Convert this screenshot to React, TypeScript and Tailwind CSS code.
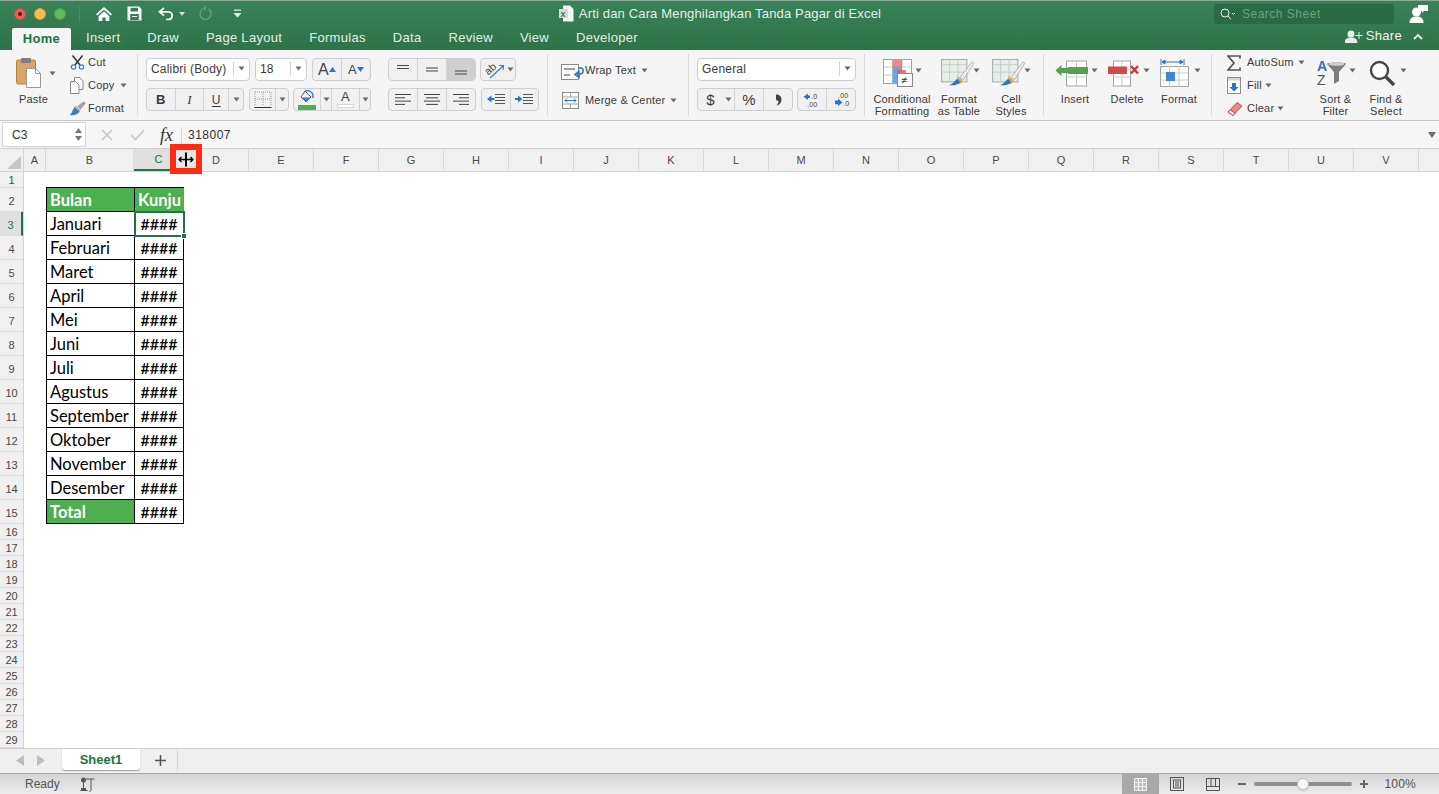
import React from "react";

const Caret = ({ className = "" }: { className?: string }) => (
  <svg width="7" height="5" viewBox="0 0 7 5" className={`shrink-0 ${className}`}>
    <path d="M0.500 0.500h6L3.500 4.500z" fill="#6b6b6b" />
  </svg>
);

const Btn = ({ w, active, children, sep = true }: { w: string; active?: boolean; children?: React.ReactNode; sep?: boolean }) => (
  <div className={`${w} h-full flex items-center justify-center ${sep ? "border-r border-[#d4d4d4] last:border-r-0" : ""} ${active ? "bg-[#cfcfcf]" : ""}`}>
    {children}
  </div>
);

const Seg = ({ w, children, className = "" }: { w: string; children?: React.ReactNode; className?: string }) => (
  <div className={`${w} h-[23px] flex rounded-[4px] border border-[#cfcfcf] bg-[#f1f1f1] overflow-hidden shrink-0 ${className}`}>
    {children}
  </div>
);

const Lines = ({ kind }: { kind: "l" | "c" | "r" }) => {
  const rows = [
    [0, 16],
    [kind === "l" ? 0 : kind === "c" ? 2 : 6, kind === "l" ? 10 : kind === "c" ? 14 : 16],
    [0, 16],
    [kind === "l" ? 0 : kind === "c" ? 2 : 6, kind === "l" ? 10 : kind === "c" ? 14 : 16],
  ];
  return (
    <svg width="16" height="13" viewBox="0 0 16 13">
      {rows.map((r, i) => (
        <path key={i} d={`M${r[0]} ${1.5 + i * 3.3}H${r[1]}`} stroke="#444" strokeWidth="1" />
      ))}
    </svg>
  );
};

const TitleIcons = () => (
  <div className="flex items-center h-full">
    <div className="flex items-center gap-[8px] pl-[14px]">
      <div className="w-[12px] h-[12px] rounded-full bg-[#ec5f57] border border-[#cf4a42] flex items-center justify-center">
        <div className="w-[4px] h-[4px] rounded-full bg-[#5a1410]" />
      </div>
      <div className="w-[12px] h-[12px] rounded-full bg-[#f5bd4f] border border-[#d9a23c]" />
      <div className="w-[12px] h-[12px] rounded-full bg-[#5dbb59] border border-[#4ba548]" />
    </div>
    <div className="w-px h-[16px] bg-[#4a8c66] ml-[13px]" />
    <svg width="18" height="16" viewBox="0 0 18 16" className="ml-[15px]">
      <path d="M9 1 1 8.200l1.200 1.300L9 3.400l6.800 6.100L17 8.200zM3.600 10.200V15h3.800v-3.600h3.200V15h3.800v-4.800L9 5.200z" fill="#fff" />
    </svg>
    <svg width="15" height="15" viewBox="0 0 15 15" className="ml-[14px]">
      <path fillRule="evenodd" d="M0.500 0.500h11.500l2.500 2.500v11.500h-14zM3.500 1.800v3.800h7.500V1.800zM3.200 8v6h8.600V8zM5 10h5v1H5z" fill="#fff" />
    </svg>
    <svg width="17" height="14" viewBox="0 0 17 14" className="ml-[16px]">
      <path d="M6 1 1.500 4.800 6 8.600M2 4.800h8.500c5 0 5 7.700-.5 7.700H8" fill="none" stroke="#fff" strokeWidth="1.700" />
    </svg>
    <svg width="6" height="4" viewBox="0 0 6 4" className="ml-[4px]">
      <path d="M0 0h6L3 4z" fill="#cfe0d6" />
    </svg>
    <svg width="15" height="15" viewBox="0 0 15 15" className="ml-[13px]">
      <path d="M8 2C4.500 2 2 4.500 2 7.800s2.500 5.700 5.500 5.700 5.500-2.500 5.500-5.700c0-2-1-3.800-2.600-4.800M7 0v5" fill="none" stroke="#639a7b" strokeWidth="1.500" />
    </svg>
    <svg width="9" height="9" viewBox="0 0 9 9" className="ml-[20px]">
      <path d="M1 0.500h7v1.300H1zM0.500 4h8L4.500 8.500z" fill="#e6efe9" />
    </svg>
  </div>
);

const Paste = () => (
  <svg width="26" height="31" viewBox="0 0 26 31">
    <rect x="0.500" y="3" width="19" height="24" rx="1.500" fill="#d9a566" stroke="#b58548" />
    <rect x="5" y="1" width="10" height="5" rx="1" fill="#7d7d7d" />
    <circle cx="10" cy="2.500" r="1.500" fill="#7d7d7d" />
    <path d="M10.500 11.500h9l5 5v14h-14z" fill="#fff" stroke="#9a9a9a" />
    <path d="M19.500 11.500v5h5" fill="none" stroke="#9a9a9a" />
  </svg>
);

const Scissors = () => (
  <svg width="15" height="15" viewBox="0 0 15 15">
    <path d="M2.500 0.500 10 10M12.500 0.500 5 10" stroke="#333" strokeWidth="1.500" fill="none" />
    <circle cx="3.500" cy="12" r="2.200" fill="none" stroke="#3b7fc8" strokeWidth="1.200" />
    <circle cx="11.500" cy="12" r="2.200" fill="none" stroke="#3b7fc8" strokeWidth="1.200" />
  </svg>
);

const CopyIcon = () => (
  <svg width="15" height="17" viewBox="0 0 15 17">
    <path d="M4.500 0.500h5l3.500 3.500v8.500H4.500z" fill="#fbfbfb" stroke="#8c8c8c" />
    <path d="M0.500 4.500h5l3.500 3.500v8.500H0.500z" fill="#fbfbfb" stroke="#8c8c8c" />
  </svg>
);

const Brush = () => (
  <svg width="17" height="15" viewBox="0 0 17 15">
    <path d="M9 5 15 0.800l1.300 1.400L11.500 8z" fill="#a9a9a9" stroke="#6f6f6f" strokeWidth="0.500" />
    <path d="M7 4.500 12 9l-1.200 1.500L5.500 6z" fill="#d7b27a" />
    <path d="M5.500 6l5.300 4.500c-2 3-6 4.500-10.300 3.500 2.500-1 3-5.500 5-8z" fill="#3b7fc8" />
  </svg>
);

const BorderIcon = () => (
  <svg width="18" height="18" viewBox="0 0 18 18">
    <path d="M1 1h16M1 8h16M1 1v14M9 1v14M17 1v14" stroke="#9b9b9b" strokeDasharray="1 1" fill="none" />
    <path d="M0.500 16.500h17" stroke="#333" strokeWidth="1" />
  </svg>
);

const FillIcon = () => (
  <svg width="18" height="20" viewBox="0 0 18 20">
    <path d="M7 1 13 7 8 12 3 7z" fill="#f5f5f5" stroke="#5c5c5c" />
    <path d="M4 7.500h8.500L8 12z" fill="#3b7fc8" />
    <path d="M7 1C10 0 14 1 15 5v3" fill="none" stroke="#3b7fc8" strokeWidth="1.500" />
    <rect x="0" y="15" width="18" height="5" fill="#4caf50" />
  </svg>
);

const RotateAb = () => (
  <svg width="22" height="18" viewBox="0 0 22 18" className="overflow-visible">
    <text x="2" y="12" fontSize="10.500" fill="#444" fontFamily="Liberation Sans" transform="rotate(-42 7 9)">ab</text>
    <path d="M7 17 20 5M16 4.500l4.500 0-.500 4.500" stroke="#3b7fc8" strokeWidth="1.200" fill="none" />
  </svg>
);

const Indent = ({ right }: { right?: boolean }) => (
  <svg width="18" height="13" viewBox="0 0 18 13">
    <path d="M8 1.500h10M8 4.500h10M8 7.500h10M8 10.500h10" stroke="#555" />
    <path d={right ? "M0 5h3V2.500L7.500 6 3 9.500V7H0z" : "M7.500 5h-3V2.500L0 6l4.500 3.500V7h3z"} fill="#2d74c4" />
  </svg>
);

const WrapIcon = () => (
  <svg width="24" height="19" viewBox="0 0 24 19">
    <rect x="0.500" y="3.500" width="17" height="15" fill="#fbfbfb" stroke="#8c8c8c" />
    <path d="M3 8h11M3 14h6" stroke="#444" />
    <path d="M17 7h3c3 0 3 6-1 6h-3M18 10.500l-4 3 4 3z" fill="none" stroke="#2d74c4" strokeWidth="1.600" />
  </svg>
);

const MergeIcon = () => (
  <svg width="17" height="17" viewBox="0 0 17 17">
    <rect x="0.500" y="0.500" width="16" height="16" fill="#fbfbfb" stroke="#8c8c8c" />
    <path d="M0.500 5h16M0.500 12h16M8.500 0.500V5M8.500 12v4.500" stroke="#a5a5a5" />
    <path d="M3 8.500h11M5 6.500l-2 2 2 2M12 6.500l2 2-2 2" fill="none" stroke="#2d74c4" />
  </svg>
);

const Conditional = () => (
  <svg width="34" height="29" viewBox="0 0 34 29">
    <rect x="0.500" y="0.500" width="28" height="24" fill="#fff" stroke="#a3a3a3" />
    <path d="M0.500 8H28M0.500 16H28M9.500 0.500V24M19 0.500V24" stroke="#c9c9c9" />
    <rect x="9.500" y="1" width="9.500" height="7" fill="#e45a5a" opacity=".7" />
    <rect x="9.500" y="8" width="9.500" height="16" fill="#6da5e0" />
    <rect x="14" y="11" width="9" height="6" fill="#e45a5a" opacity=".8" />
    <rect x="14.500" y="14.500" width="15" height="13" fill="#fff" stroke="#8a8a8a" />
    <text x="18" y="25" fontSize="11" fill="#333" fontFamily="Liberation Sans">≠</text>
  </svg>
);

const TableBrush = () => (
  <svg width="36" height="29" viewBox="0 0 36 31">
    <rect x="0.500" y="0.500" width="27" height="24" fill="#e4efe9" stroke="#a3a3a3" />
    <path d="M0.500 6H27M0.500 14H27M9 0.500V24M18 0.500V24" stroke="#c9c9c9" />
    <path d="M20 20 33 3l2 1.500L24 22z" fill="#ececec" stroke="#9a9a9a" strokeWidth="0.700" />
    <path d="M17 18l6 5c-1 3-3 4-5 4z" fill="#dba75c" />
    <path d="M17 21c2 2 3 3 3 4-3 3-6 3-12 3 4-1 6-4 9-7z" fill="#2d74c4" />
  </svg>
);

const InsertIcon = () => (
  <svg width="36" height="27" viewBox="0 0 36 27">
    <rect x="11.500" y="1" width="20" height="25" fill="#fff" stroke="#a3a3a3" />
    <path d="M11.500 9h20M11.500 17h20M21.500 1v25" stroke="#c9c9c9" />
    <rect x="13" y="7" width="20" height="7" fill="#55a04f" />
    <path d="M0.500 10.500 6.500 5v11z" fill="#55a04f" />
    <rect x="6" y="8" width="8" height="5" fill="#55a04f" />
  </svg>
);

const DeleteIcon = () => (
  <svg width="33" height="27" viewBox="0 0 33 27">
    <rect x="5.500" y="1" width="17" height="25" fill="#fff" stroke="#a3a3a3" />
    <path d="M5.500 9h17M5.500 17h17M14 1v25" stroke="#c9c9c9" />
    <rect x="0" y="6.500" width="19" height="7.500" fill="#cf4b4b" />
    <path d="M23 6l7 7.500M30 6l-7 7.500" stroke="#c23b3b" strokeWidth="2.400" />
  </svg>
);

const FormatIcon = () => (
  <svg width="30" height="28" viewBox="0 0 30 28">
    <path d="M1 0v6M24 0v6M2 3h21M2 3l3-2v4zM23 3l-3-2v4z" stroke="#2d74c4" fill="#2d74c4" strokeWidth="1" />
    <rect x="0.500" y="7.500" width="28" height="20" fill="#fff" stroke="#a3a3a3" />
    <path d="M0.500 14h28M0.500 21h28M9.500 7.500v20M19 7.500v20" stroke="#c9c9c9" />
    <rect x="6" y="13" width="9" height="9" fill="#3d85d8" />
  </svg>
);

const Eraser = () => (
  <svg width="16" height="16" viewBox="0 0 16 16">
    <path d="M1 11 10 1.500l5 3.500-9 9.500z" fill="#ef8a8a" stroke="#c24d4d" />
    <path d="M1 11l5 3.500 2-2.200-5-3.500z" fill="#f7f0f0" stroke="#c24d4d" />
  </svg>
);

const FillBox = () => (
  <svg width="14" height="17" viewBox="0 0 14 17">
    <rect x="0.500" y="0.500" width="13" height="16" fill="#fff" stroke="#8c8c8c" />
    <rect x="1" y="1" width="12" height="2.500" fill="#d5d5d5" />
    <path d="M5 6h4v4h2.500L7 14.500 2.500 10H5z" fill="#2d74c4" />
  </svg>
);

const SortIcon = () => (
  <svg width="33" height="30" viewBox="0 0 33 30" className="overflow-visible">
    <text x="1" y="13" fontSize="14" fontWeight="700" fill="#2d74c4" fontFamily="Liberation Sans">A</text>
    <text x="1" y="27" fontSize="14" fill="#555" fontFamily="Liberation Sans">Z</text>
    <path d="M11 6c0-2 19-2 19 0l-7 8v9l-5 3V14z" fill="#7c7c7c" />
    <ellipse cx="20.500" cy="6" rx="8" ry="1.800" fill="#cfcfcf" />
  </svg>
);

const Magnifier = () => (
  <svg width="27" height="27" viewBox="0 0 27 27">
    <circle cx="10.500" cy="10.500" r="8.500" fill="#fff" stroke="#444" strokeWidth="2.400" />
    <path d="M17 17l8 8" stroke="#444" strokeWidth="3.400" />
  </svg>
);

const Divider = () => <div className="w-px h-[62px] bg-[#dcdcdc] mt-[4px] shrink-0" />;

const LargeAction = ({ label, icon, w, row = "", caret = "" }: { label: string[]; icon: React.ReactNode; w: string; row?: string; caret?: string }) => (
  <div className={`${w} flex flex-col items-center shrink-0`}>
    <div className={`h-[36px] mt-[4px] flex items-center ${row}`}>
      <span className="shrink-0 block mt-[2px]">{icon}</span>
      <Caret className={`${caret} mt-[-3px]`} />
    </div>
    <div className="mt-[3px] text-center leading-[12px]">
      {label.map((l) => (
        <div key={l}>{l}</div>
      ))}
    </div>
  </div>
);

const Ribbon = () => (
  <div className="h-[71px] flex bg-[#f5f5f5] border-b border-[#c9c9c9] text-[11px] leading-none tracking-[0.2px] text-[#3a3a3a] shrink-0">
    {/* Clipboard */}
    <div className="w-[137px] flex shrink-0">
      <div className="w-[65px] shrink-0 flex flex-col pl-[16px] pt-[7px]">
        <div className="flex items-center gap-[7px]">
          <Paste />
          <Caret className="mt-[1px]" />
        </div>
        <div className="mt-[6px] ml-[3px]">Paste</div>
      </div>
      <div className="flex flex-col pl-[2px] pt-[4px] gap-[6px]">
        <div className="flex items-center h-[17px]"><div className="w-[20px] flex justify-center"><Scissors /></div><span className="ml-[1px]">Cut</span></div>
        <div className="flex items-center h-[17px]"><div className="w-[20px] flex justify-center"><CopyIcon /></div><span className="ml-[1px]">Copy</span><Caret className="ml-[6px]" /></div>
        <div className="flex items-center h-[17px]"><div className="w-[20px] flex justify-center"><Brush /></div><span className="ml-[1px]">Format</span></div>
      </div>
    </div>
    <Divider />
    {/* Font */}
    <div className="w-[250px] pl-[8px] pt-[8px] flex flex-col gap-[7px] shrink-0">
      <div className="flex gap-[5px]">
        <div className="w-[104px] h-[23px] rounded-[4px] border border-[#cfcfcf] bg-white flex items-center pl-[4px] pb-[2px] text-[12px]">
          <span className="flex-1">Calibri (Body)</span>
          <span className="w-px h-[14px] bg-[#d4d4d4]" />
          <Caret className="mx-[4px]" />
        </div>
        <div className="w-[52px] h-[23px] rounded-[4px] border border-[#cfcfcf] bg-white flex items-center pl-[4px] pb-[2px] text-[12px]">
          <span className="flex-1">18</span>
          <span className="w-px h-[14px] bg-[#d4d4d4]" />
          <Caret className="mx-[4px]" />
        </div>
        <Seg w="w-[59px]">
          <Btn w="w-[30px]">
            <span className="text-[16px] text-[#444]">A</span>
            <svg width="7" height="5" viewBox="0 0 7 5"><path d="M0 5h7L3.500 0z" fill="#2d74c4" /></svg>
          </Btn>
          <Btn w="w-[29px]">
            <span className="text-[13px] text-[#444]">A</span>
            <svg width="7" height="5" viewBox="0 0 7 5"><path d="M0 0h7L3.500 5z" fill="#2d74c4" /></svg>
          </Btn>
        </Seg>
      </div>
      <div className="flex gap-[5px]">
        <Seg w="w-[98px]">
          <Btn w="w-[29px]"><span className="text-[13px] font-bold">B</span></Btn>
          <Btn w="w-[29px]"><span className="text-[13px] italic font-[Liberation_Serif]">I</span></Btn>
          <Btn w="w-[25px]"><span className="text-[12px] underline underline-offset-2">U</span></Btn>
          <Btn w="w-[14px]"><Caret /></Btn>
        </Seg>
        <Seg w="w-[40px]">
          <Btn w="w-[27px]"><BorderIcon /></Btn>
          <Btn w="w-[12px]"><Caret /></Btn>
        </Seg>
        <Seg w="w-[78px]" className="ml-[-1px]">
          <Btn w="w-[27px]"><FillIcon /></Btn>
          <Btn w="w-[11px]"><Caret /></Btn>
          <Btn w="w-[28px]">
            <div className="flex flex-col items-center gap-[1px]">
              <span className="text-[13px] leading-[12px] text-[#444]">A</span>
              <span className="w-[17px] h-[4px] bg-white border border-[#d6d6d6]" />
            </div>
          </Btn>
          <Btn w="w-[10px]"><Caret /></Btn>
        </Seg>
      </div>
    </div>
    {/* Alignment */}
    <div className="w-[159px] pt-[8px] flex flex-col gap-[7px] shrink-0">
      <div className="flex gap-[4px]">
        <Seg w="w-[88px]">
          <Btn w="w-[29px]"><svg width="14" height="11" viewBox="0 0 14 11"><path d="M1 1.500h12M1 4.500h12" stroke="#444" /></svg></Btn>
          <Btn w="w-[29px]"><svg width="14" height="11" viewBox="0 0 14 11"><path d="M1 4h12M1 7h12" stroke="#444" /></svg></Btn>
          <Btn w="w-[28px]" active><svg width="14" height="11" viewBox="0 0 14 11"><path d="M1 7h12M1 10h12" stroke="#444" /></svg></Btn>
        </Seg>
        <Seg w="w-[36px]">
          <Btn w="w-[34px]" sep={false}><RotateAb /><Caret className="ml-[2px]" /></Btn>
        </Seg>
      </div>
      <div className="flex gap-[5px]">
        <Seg w="w-[88px]">
          <Btn w="w-[29px]"><Lines kind="l" /></Btn>
          <Btn w="w-[29px]"><Lines kind="c" /></Btn>
          <Btn w="w-[28px]"><Lines kind="r" /></Btn>
        </Seg>
        <Seg w="w-[58px]">
          <Btn w="w-[29px]"><Indent /></Btn>
          <Btn w="w-[28px]"><Indent right /></Btn>
        </Seg>
      </div>
    </div>
    <Divider />
    {/* Wrap / merge */}
    <div className="w-[140px] pl-[13px] flex flex-col shrink-0">
      <div className="h-[18px] mt-[11px] flex items-center"><WrapIcon /><span className="ml-[0px]">Wrap Text</span><Caret className="ml-[5px]" /></div>
      <div className="h-[18px] mt-[12px] flex items-center"><span className="ml-[1px]"><MergeIcon /></span><span className="ml-[6px]">Merge &amp; Center</span><Caret className="ml-[5px]" /></div>
    </div>
    <Divider />
    {/* Number */}
    <div className="w-[175px] pl-[8px] pt-[8px] flex flex-col gap-[7px] shrink-0">
      <div className="w-[159px] h-[23px] rounded-[4px] border border-[#cfcfcf] bg-white flex items-center pl-[4px] pb-[2px] text-[12px]">
        <span className="flex-1">General</span>
        <span className="w-px h-[14px] bg-[#d4d4d4]" />
        <Caret className="mx-[4px]" />
      </div>
      <div className="flex gap-[4px]">
        <Seg w="w-[96px]">
          <Btn w="w-[25px]" sep={false}><span className="text-[15px]">$</span></Btn>
          <Btn w="w-[12px]"><Caret /></Btn>
          <Btn w="w-[29px]"><span className="text-[15px]">%</span></Btn>
          <Btn w="w-[28px]">
            <svg width="7" height="12" viewBox="0 0 7 12"><path d="M1 0.500c3.500 0 5.500 2 5.500 5s-2 5.500-5 6c1.500-1.500 2-3 2-4.500-1.500 0-2.500-1-2.500-2 0-1.500 0-4.500 0-4.500z" fill="#444" /></svg>
          </Btn>
        </Seg>
        <Seg w="w-[59px]">
          <Btn w="w-[29px]">
            <svg width="19" height="15" viewBox="0 0 19 15"><path d="M5 1.500v2h2v2.500H5v2L0.500 4.800z" fill="#2d74c4" /><text x="8" y="7" fontSize="7" fill="#444" fontFamily="Liberation Sans">.0</text><text x="4" y="14.500" fontSize="7" fill="#444" fontFamily="Liberation Sans">.00</text></svg>
          </Btn>
          <Btn w="w-[28px]">
            <svg width="19" height="15" viewBox="0 0 19 15"><text x="6" y="6" fontSize="7" fill="#444" fontFamily="Liberation Sans">.00</text><path d="M3 8.500h3V6.500l4.500 4L6 14v-1.800H3z" fill="#2d74c4" /><text x="11" y="14" fontSize="7" fill="#444" fontFamily="Liberation Sans">.0</text></svg>
          </Btn>
        </Seg>
      </div>
    </div>
    <Divider />
    {/* Styles */}
    <div className="w-[178px] flex pl-[7px] shrink-0">
      <LargeAction w="w-[60px]" label={["Conditional", "Formatting"]} icon={<Conditional />} caret="ml-[-2px]" />
      <LargeAction w="w-[54px]" label={["Format", "as Table"]} icon={<TableBrush />} caret="ml-[-3px]" row="ml-[2px]" />
      <LargeAction w="w-[50px]" label={["Cell", "Styles"]} icon={<TableBrush />} caret="ml-[-3px]" />
    </div>
    <Divider />
    {/* Cells */}
    <div className="w-[167px] flex pl-[5px] shrink-0">
      <LargeAction w="w-[52px]" label={["Insert"]} icon={<InsertIcon />} row="ml-[3px]" />
      <LargeAction w="w-[52px]" label={["Delete"]} icon={<DeleteIcon />} caret="ml-[2px]" row="ml-[4px]" />
      <LargeAction w="w-[52px]" label={["Format"]} icon={<FormatIcon />} caret="ml-[4px]" row="ml-[3px]" />
    </div>
    <Divider />
    {/* Editing */}
    <div className="flex flex-1 min-w-0">
      <div className="w-[100px] pl-[15px] pt-[4px] flex flex-col gap-[6px] shrink-0">
        <div className="flex items-center h-[17px]"><div className="w-[20px]"><svg width="14" height="16" viewBox="0 0 14 16"><path d="M13 3.500V1H1l6 7-6 7h12v-2.500" fill="none" stroke="#555" strokeWidth="1.700" /></svg></div><span>AutoSum</span><Caret className="ml-[4px]" /></div>
        <div className="flex items-center h-[17px]"><div className="w-[20px]"><FillBox /></div><span>Fill</span><Caret className="ml-[3px]" /></div>
        <div className="flex items-center h-[17px]"><div className="w-[20px]"><Eraser /></div><span>Clear</span><Caret className="ml-[3px]" /></div>
      </div>
      <LargeAction w="w-[47px]" label={["Sort &", "Filter"]} icon={<SortIcon />} />
      <LargeAction w="w-[54px]" label={["Find &", "Select"]} icon={<Magnifier />} caret="ml-[4px]" row="ml-[4px]" />
    </div>
  </div>
);

const FormulaBar = () => (
  <div className="h-[28px] flex items-center bg-[#f6f6f6] border-b border-[#d0d0d0] text-[12px] text-[#333] shrink-0">
    <div className="ml-[2px] w-[84px] h-[25px] bg-white border border-[#d4d4d4] flex items-center pl-[9px] shrink-0">
      <span className="flex-1">C3</span>
      <div className="flex flex-col gap-[3px] mr-[3px]">
        <svg width="7" height="5" viewBox="0 0 7 5"><path d="M0 5h7L3.500 0z" fill="#777" /></svg>
        <svg width="7" height="5" viewBox="0 0 7 5"><path d="M0 0h7L3.500 5z" fill="#777" /></svg>
      </div>
    </div>
    <svg width="12" height="12" viewBox="0 0 12 12" className="ml-[15px]"><path d="M1 1l10 10M11 1 1 11" stroke="#c9c9c9" strokeWidth="1.600" /></svg>
    <svg width="15" height="12" viewBox="0 0 15 12" className="ml-[17px]"><path d="M1 6l4.500 4.500L14 1" fill="none" stroke="#c9c9c9" strokeWidth="1.600" /></svg>
    <span className="ml-[15px] w-[16px] text-[18px] leading-none italic font-[Liberation_Serif] text-[#333]">fx</span>
    <span className="ml-[5px] w-px h-[16px] bg-[#d4d4d4]" />
    <span className="ml-[6px] flex-1 tracking-[0.5px]">318007</span>
    <svg width="8" height="6" viewBox="0 0 8 6" className="mr-[3px]"><path d="M0 0h8L4 6z" fill="#6b6b6b" /></svg>
  </div>
);

const columns: [string, number][] = [
  ["A", 22], ["B", 88], ["C", 50], ["D", 65], ["E", 65], ["F", 65], ["G", 65], ["H", 65], ["I", 65],
  ["J", 65], ["K", 65], ["L", 65], ["M", 65], ["N", 65], ["O", 65], ["P", 65], ["Q", 65], ["R", 65],
  ["S", 65], ["T", 65], ["U", 65], ["V", 65], ["", 20],
];

const ColumnHeader = () => (
  <div className="h-[23px] flex bg-[#f0f0f0] border-b border-[#d4d4d4] text-[11px] text-[#4a4a4a] shrink-0 relative">
    <div className="w-[24px] shrink-0 border-r border-[#d4d4d4] relative overflow-hidden">
      <svg width="24" height="23" viewBox="0 0 24 23" className="block"><path d="M21 7v13H7z" fill="#c6c6c6" /></svg>
    </div>
    {columns.map(([c, w]) => (
      <div
        key={c || "end"}
        style={{ width: w }}
        className={`shrink-0 h-full flex items-center justify-center ${c ? "border-r border-[#d9d9d9]" : ""} ${c === "C" ? "bg-[#e0e0e0] text-[#217346] border-b-2 border-b-[#217346]" : ""}`}
      >
        {c}
      </div>
    ))}
    <div className="absolute left-[170px] top-[-5px] w-[32px] h-[30px] bg-[#ff2a12] flex items-center justify-center">
      <div className="w-[20px] h-[18px] bg-[#e6e6e6] flex items-center justify-center">
        <svg width="16" height="15" viewBox="0 0 16 15">
          <path d="M8 0.500v14" fill="none" stroke="#000" strokeWidth="2" />
          <path d="M1 7.500h14M3.500 5 1 7.500 3.500 10M12.500 5 15 7.500 12.500 10" fill="none" stroke="#000" strokeWidth="1.300" />
        </svg>
      </div>
    </div>
  </div>
);

const rowHeights = [16, 24, 24, 24, 24, 24, 24, 24, 24, 24, 24, 24, 24, 24, 24, 16, 16, 16, 16, 16, 16, 16, 16, 16, 16, 16, 16, 16, 16];

const RowHeader = () => (
  <div className="w-[24px] shrink-0 bg-[#f0f0f0] border-r border-[#d4d4d4] flex flex-col text-[11px] text-[#4a4a4a]">
    {rowHeights.map((h, i) => (
      <div
        key={i}
        style={{ height: h }}
        className={`shrink-0 flex items-center justify-center border-b border-[#dcdcdc] ${h > 16 ? "pt-[3px]" : "pt-[1px]"} ${i === 2 ? "bg-[#e0e0e0] text-[#217346] border-r-2 border-r-[#217346]" : ""}`}
      >
        {i + 1}
      </div>
    ))}
  </div>
);

const months = ["Januari", "Februari", "Maret", "April", "Mei", "Juni", "Juli", "Agustus", "September", "Oktober", "November", "Desember"];
const cellText = "h-[24px] flex items-center overflow-hidden whitespace-nowrap border-black";
const hashCell = `${cellText} justify-center border-r border-b text-[16px] font-medium`;

const DataTable = () => (
  <div className="ml-[22px] mt-[15px] w-[138px] grid grid-cols-[88px_49px] border-t border-l border-black font-[Lato] text-[16.500px] text-black self-start relative">
    <div className={`${cellText} pt-[2px] bg-[#4caf50] text-white font-bold pl-[3px] border-r border-b`}>Bulan</div>
    <div className={`${cellText} pt-[2px] bg-[#4caf50] text-white font-bold pl-[3px] border-r-0 border-b`}>Kunju</div>
    {months.map((m) => (
      <React.Fragment key={m}>
        <div className={`${cellText} pt-[2px] pl-[3px] border-r border-b`}>{m}</div>
        <div className={hashCell}>####</div>
      </React.Fragment>
    ))}
    <div className={`${cellText} pt-[2px] bg-[#4caf50] text-white font-bold pl-[3px] border-r border-b`}>Total</div>
    <div className={hashCell}>####</div>
    <div className="absolute left-[87px] top-[23px] w-[51px] h-[26px] border-2 border-[#217346] pointer-events-none" />
    <div className="absolute left-[134px] top-[45px] w-[6px] h-[6px] bg-[#217346] border border-white" />
  </div>
);

const SheetTabs = () => (
  <div className="h-[25px] flex bg-[#efefef] border-t border-[#cfcfcf] shrink-0">
    <div className="flex items-center pl-[16px] gap-[13px] w-[62px] shrink-0 h-[22px]">
      <svg width="8" height="11" viewBox="0 0 8 11"><path d="M8 0v11L0 5.500z" fill="#bdbdbd" /></svg>
      <svg width="8" height="11" viewBox="0 0 8 11"><path d="M0 0v11l8-5.500z" fill="#bdbdbd" /></svg>
    </div>
    <div className="w-[78px] h-[21px] bg-white rounded-b-[3px] shadow-[0_1px_1px_rgba(0,0,0,0.3)] flex items-center justify-center text-[13px] font-bold text-[#217346] shrink-0">Sheet1</div>
    <div className="w-[38px] h-[22px] pl-[4px] border-r border-[#d4d4d4] flex items-center justify-center shrink-0">
      <svg width="11" height="11" viewBox="0 0 11 11"><path d="M5.500 0v11M0 5.500h11" stroke="#555" strokeWidth="1.600" /></svg>
    </div>
  </div>
);

const StatusBar = () => (
  <div className="h-[21px] flex items-center bg-gradient-to-b from-[#d4d4d4] to-[#ececec] border-t border-[#a9a9a9] text-[12px] text-[#555] shrink-0">
    <span className="ml-[25px]">Ready</span>
    <svg width="16" height="15" viewBox="0 0 16 15" className="ml-[20px]">
      <circle cx="3.500" cy="3" r="2.500" fill="#555" />
      <path d="M3.500 5v7M6 2h8.500M11 2v11c0 1-1 1.500-2 1.500M0.500 13.500h7" fill="none" stroke="#555" />
      <rect x="1" y="11" width="5" height="3" fill="#555" />
    </svg>
    <div className="flex-1" />
    <div className="w-[37px] h-[20px] bg-[#a9a9a9] flex items-center justify-center">
      <svg width="13" height="13" viewBox="0 0 13 13"><path d="M0.500 0.500h12v12H0.500zM4.500 0.500v12M8.500 0.500v12M0.500 4.500h12M0.500 8.500h12" fill="#bdbdbd" stroke="#f5f5f5" /></svg>
    </div>
    <div className="w-[36px] flex justify-center">
      <svg width="14" height="14" viewBox="0 0 14 14"><rect x="0.500" y="0.500" width="13" height="13" fill="none" stroke="#555" /><rect x="3.500" y="3" width="7" height="8" fill="none" stroke="#555" /><path d="M5 5h4M5 7h4M5 9h4" stroke="#555" /></svg>
    </div>
    <div className="w-[36px] flex justify-center">
      <svg width="14" height="13" viewBox="0 0 14 13"><path d="M0.500 0.500h13v12H0.500zM0.500 8.500h13M5 0.500v8M9.500 0.500v8" fill="none" stroke="#555" /></svg>
    </div>
    <svg width="8" height="2" viewBox="0 0 8 2" className="ml-[7px]"><rect width="8" height="2" fill="#666" /></svg>
    <div className="ml-[8px] w-[98px] h-[4px] rounded-full bg-[#8f8f8f] relative">
      <div className="absolute left-[43px] top-[-4px] w-[12px] h-[12px] rounded-full bg-[#f7f7f7] border border-[#c0c0c0] shadow-sm" />
    </div>
    <svg width="8" height="8" viewBox="0 0 8 8" className="ml-[8px]"><path d="M4 0v8M0 4h8" stroke="#666" strokeWidth="2" /></svg>
    <span className="ml-[17px] mr-[23px] tracking-[0.2px]">100%</span>
  </div>
);

export default function App() {
  return (
    <div className="w-[1439px] h-[794px] overflow-hidden flex flex-col bg-white font-[Liberation_Sans]">
      {/* title bar + tabs */}
      <div className="h-[50px] shrink-0 bg-gradient-to-b from-[#38825a] to-[#2f7249] text-white flex flex-col border-t border-[#8aa797]">
        <div className="h-[26px] flex items-center relative">
          <div className="w-[420px] h-full"><TitleIcons /></div>
          <div className="flex-1 flex justify-center items-center text-[13px] text-[#e3eee8] tracking-[0.16px] pr-[194px]">
            <svg width="15" height="17" viewBox="0 0 15 17" className="mr-[5px]">
              <path d="M4 0.500h7l3.500 3.500v12.500H4z" fill="#f4f4f4" />
              <rect x="0" y="4" width="9" height="9" fill="#cfdcd4" />
              <text x="1.500" y="11.500" fontSize="7.500" fill="#2f7249" fontFamily="Liberation Sans" fontWeight="700">X</text>
            </svg>
            Arti dan Cara Menghilangkan Tanda Pagar di Excel
          </div>
          <div className="w-[180px] h-[20px] rounded-[3px] bg-[#2a6a44] flex items-center pl-[6px] text-[12px] text-[#67a583] tracking-[0.5px] shrink-0">
            <svg width="16" height="12" viewBox="0 0 16 12"><circle cx="5" cy="5" r="4" fill="none" stroke="#e6efe9" /><path d="M8 8l3 3.500M12 5l1.500 1.500L15 5" fill="none" stroke="#e6efe9" /></svg>
            <span className="ml-[6px]">Search Sheet</span>
          </div>
          <svg width="20" height="20" viewBox="0 0 20 20" className="ml-[15px] mr-[10px]">
            <circle cx="7.500" cy="8" r="4.500" fill="#fff" />
            <path d="M0.500 19c0-5 3-6.500 7-6.500s7 1.500 7 6.500z" fill="#fff" />
            <path d="M9 1h10v6h-4l-2 2V7H9z" fill="#fff" />
          </svg>
        </div>
        <div className="h-[24px] flex items-end relative text-[13px] text-[#e3ede7] tracking-[0.3px]">
          <div className="ml-[12px] w-[59px] h-[22px] pb-[1px] rounded-t-[2px] bg-[#f5f5f5] text-[#217346] flex items-center justify-center font-bold">Home</div>
          <div className="flex h-[22px] pb-[2px] items-center gap-[27px] ml-[15px]">
            <span>Insert</span>
            <span>Draw</span>
            <span>Page Layout</span>
            <span>Formulas</span>
            <span>Data</span>
            <span>Review</span>
            <span>View</span>
            <span>Developer</span>
          </div>
          <div className="flex-1" />
          <div className="flex h-[22px] items-center text-[#f0f5f2] text-[13px] mb-[3px]">
            <svg width="18" height="13" viewBox="0 0 18 13" className="mr-[3px]">
              <circle cx="6" cy="4" r="3.500" fill="#e6efe9" />
              <path d="M0 13c0-4 2-5 6-5s6 1 6 5zM14 2v7M10.500 5.500h7" fill="#e6efe9" stroke="#e6efe9" />
            </svg>
            <span>Share</span>
            <svg width="10" height="7" viewBox="0 0 10 7" className="ml-[11px] mr-[16px]"><path d="M1 6l4-4 4 4" fill="none" stroke="#e6efe9" strokeWidth="1.800" /></svg>
          </div>
        </div>
      </div>
      <Ribbon />
      <FormulaBar />
      <ColumnHeader />
      <div className="flex-1 flex min-h-0 overflow-hidden">
        <RowHeader />
        <DataTable />
      </div>
      <SheetTabs />
      <StatusBar />
    </div>
  );
}
